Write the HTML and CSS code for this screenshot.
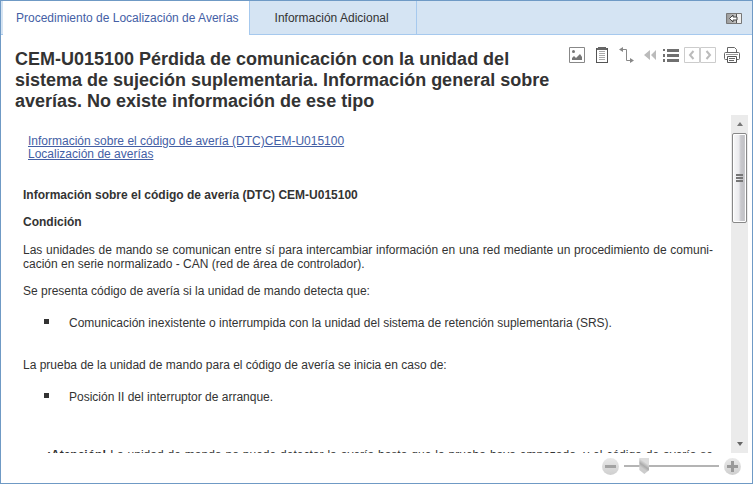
FILE: index.html
```
<!DOCTYPE html>
<html lang="es">
<head>
    <meta charset="UTF-8">
    <title>CEM-U015100</title>
    <link rel="stylesheet" href="styles.css">
</head>
<body>
    <div class="panel">
        <div class="tabs">
            <button type="button" class="tab active">Procedimiento de Localización de Averías</button>
            <button type="button" class="tab">Información Adicional</button>
            <button type="button" class="icon-btn collapse" aria-label="Ocultar">
                <svg width="16" height="11" viewBox="0 0 16 11">
                    <defs>
                        <linearGradient id="dock" x1="0" x2="1"><stop offset="0" stop-color="#999"/><stop offset="1" stop-color="#ddd"/></linearGradient>
                    </defs>
                    <path d="M.5 .5h15v10H.5z" fill="url(#dock)" stroke="#777"/>
                    <path d="M11 1h4v9h-4z" fill="#eee"/>
                    <path d="M10 1h1v9h-1z" fill="#555"/>
                    <path d="M3.500 5.500L7 2v2h4v3H7v2z" fill="#fff" stroke="#444"/>
                </svg>
            </button>
        </div>

        <div class="header">
            <h1>CEM-U015100 Pérdida de comunicación con la unidad del sistema de sujeción suplementaria. Información general sobre averías. No existe información de ese tipo</h1>
            <div class="toolbar">
                <button type="button" class="icon-btn" aria-label="Imagen">
                    <svg width="16" height="16" viewBox="0 0 16 16">
                        <path d="M.5 .5h15v15H.5z" fill="#fff" stroke="#888"/>
                        <circle cx="4.500" cy="4.500" r="1.500" fill="#777"/>
                        <path d="M3 13v-2l2-2 2 2 1-1 1-1 2-2 2 3v3z" fill="#777"/>
                    </svg>
                </button>
                <button type="button" class="icon-btn note" aria-label="Notas">
                    <svg width="12" height="16" viewBox="0 0 12 16" shape-rendering="crispEdges">
                        <path d="M.5 1.500h11v14H.5z" fill="#fff" stroke="#555"/>
                        <path d="M1 1h10v2H1zM2 0h8v2H2z" fill="#666"/>
                        <path d="M3 4.500h6M3 6.500h6M3 8.500h6M3 10.500h6M3 12.500h6" stroke="#aaa"/>
                    </svg>
                </button>
                <button type="button" class="icon-btn" aria-label="Conexión">
                    <svg width="16" height="16" viewBox="0 0 16 16">
                        <path d="M3 2.500h4.500v11H12" fill="none" stroke="#888"/>
                        <path d="M0 2.500L4 0v5zM15 13.500l-4-2.500v5z" fill="#888"/>
                    </svg>
                </button>
                <button type="button" class="icon-btn rewind" aria-label="Atrás">
                    <svg width="13" height="10" viewBox="0 0 13 10"><path d="M6 0v10L0 5zM12 0v10L7 5z" fill="#bbb"/></svg>
                </button>
                <button type="button" class="icon-btn list" aria-label="Lista">
                    <svg width="16" height="13" viewBox="0 0 16 13" shape-rendering="crispEdges">
                        <path d="M0 0h2v2H0zM4 0h12v3H4zM0 5h2v3H0zM4 5h12v3H4zM0 10h2v3H0zM4 10h12v3H4z" fill="#707070"/>
                    </svg>
                </button>
                <div class="pager">
                    <button type="button" class="icon-btn" aria-label="Anterior">
                        <svg width="16" height="16" viewBox="0 0 16 16"><path d="M.5 .5h15v15H.5z" fill="#fff" stroke="#ccc"/><path d="M9.500 4L6 8l3.500 4" fill="none" stroke="#bbb" stroke-width="2"/></svg>
                    </button>
                    <button type="button" class="icon-btn" aria-label="Siguiente">
                        <svg width="16" height="16" viewBox="0 0 16 16"><path d="M.5 .5h15v15H.5z" fill="#fff" stroke="#ccc"/><path d="M6.500 4L10 8l-3.500 4" fill="none" stroke="#bbb" stroke-width="2"/></svg>
                    </button>
                </div>
                <button type="button" class="icon-btn" aria-label="Imprimir">
                    <svg width="16" height="16" viewBox="0 0 16 16">
                        <path d="M3.500 5V.5h7l2 2V5" fill="#fff" stroke="#666"/>
                        <rect x=".5" y="5.500" width="15" height="7" rx="1" fill="#fff" stroke="#666"/>
                        <path d="M2 7h12v1H2z" fill="#999"/>
                        <path d="M3.500 9.500h9v6h-9z" fill="#fff" stroke="#555"/>
                        <path d="M5 11.500h6M5 13.500h5" stroke="#666"/>
                    </svg>
                </button>
            </div>
        </div>

        <div class="view">
            <div class="document">
                <div class="links">
                    <a href="#dtc">Información sobre el código de avería (DTC)CEM-U015100</a>
                    <a href="#localizacion">Localización de averías</a>
                </div>
                <h2 id="dtc">Información sobre el código de avería (DTC) CEM-U015100</h2>
                <h2>Condición</h2>
                <p>Las unidades de mando se comunican entre sí para intercambiar información en una red mediante un procedimiento de comuni&shy;cación en serie normalizado - CAN (red de área de controlador).</p>
                <p>Se presenta código de avería si la unidad de mando detecta que:</p>
                <ul>
                    <li>Comunicación inexistente o interrumpida con la unidad del sistema de retención suplementaria (SRS).</li>
                </ul>
                <p>La prueba de la unidad de mando para el código de avería se inicia en caso de:</p>
                <ul>
                    <li>Posición II del interruptor de arranque.</li>
                </ul>
                <p class="notice" id="localizacion"><b>¡Atención!</b> La unidad de mando no puede detectar la avería hasta que la prueba haya empezado, y el código de avería se</p>
            </div>
            <div class="scrollbar">
                <button type="button" class="icon-btn arrow" aria-label="Subir">
                    <svg width="6" height="4" viewBox="0 0 6 4"><path d="M0 4l3-4 3 4z" fill="#777"/></svg>
                </button>
                <div class="thumb"><span></span><span></span><span></span></div>
                <button type="button" class="icon-btn arrow down" aria-label="Bajar">
                    <svg width="6" height="4" viewBox="0 0 6 4"><path d="M0 0h6L3 4z" fill="#666"/></svg>
                </button>
            </div>
        </div>

        <div class="zoom">
            <button type="button" class="icon-btn round" aria-label="Reducir">
                <svg width="11" height="11" viewBox="0 0 11 11"><path d="M0 4h11v3H0z" fill="#a3a3a3"/></svg>
            </button>
            <input type="range" min="0" max="100" value="18" aria-label="Zoom">
            <button type="button" class="icon-btn round" aria-label="Ampliar">
                <svg width="11" height="11" viewBox="0 0 11 11"><path d="M0 4h4V0h3v4h4v3H7v4H4V7H0z" fill="#999"/></svg>
            </button>
        </div>
    </div>
</body>
</html>
```
FILE: styles.css
```
* {
    box-sizing: border-box;
    margin: 0;
    padding: 0;
}
body {
    font: 12px/14px "Liberation Sans", Arial, sans-serif;
    color: #333;
    background: #fff;
}
button {
    font: inherit;
    color: inherit;
    border: 0;
    background: none;
    cursor: pointer;
}
svg {
    display: block;
}
.panel {
    height: 100vh;
    display: flex;
    flex-direction: column;
    border: 1px solid #6f9ac5;
}

/* tabs */
.tabs {
    flex: none;
    display: flex;
    height: 34px;
    padding-left: 2px;
    background: #d5e4f3;
    box-shadow: inset 0 -1px #a6c9ee;
}
.tab {
    padding: 0 27px 0 25px;
    border-right: 1px solid #a6c9ee;
}
.tab.active {
    padding: 0 10px 0 13px;
    color: #4460a5;
    background: #fff;
}
.icon-btn {
    flex: none;
    display: flex;
    align-items: center;
    justify-content: center;
}
.collapse {
    margin-left: auto;
    padding-right: 10px;
}

/* title and tools */
.header {
    flex: none;
    display: flex;
    justify-content: space-between;
    align-items: flex-start;
    gap: 12px;
    padding: 14px 12px 3px 14px;
}
h1 {
    font-size: 18px;
    line-height: 21px;
}
.toolbar {
    flex: none;
    display: flex;
    align-items: center;
    height: 16px;
    margin-top: -2px;
}
.note {
    margin: 0 11px;
}
.rewind {
    margin: 0 6px 0 9px;
}
.list {
    margin-right: 5px;
}
.pager {
    display: flex;
    margin-right: 8px;
}

/* document */
.view {
    flex: 1;
    min-height: 0;
    display: flex;
    padding-right: 4px;
}
.document {
    flex: 1;
    overflow: hidden;
    padding: 20px 18px 0 22px;
}
.links {
    padding-left: 5px;
    margin-bottom: 27px;
    line-height: 13px;
}
.links a {
    display: table;
    color: #4460a5;
}
h2 {
    font-size: 12px;
    line-height: 14px;
    margin-bottom: 13px;
}
p {
    margin-bottom: 13px;
    text-align: justify;
}
h2 + p {
    margin-top: 14px;
}
ul {
    list-style: none;
    margin: 18px 0 28px;
}
li {
    display: flex;
    padding-left: 21px;
}
li::before {
    content: "";
    width: 5px;
    height: 5px;
    margin: 3px 20px 0 0;
    background: #333;
}
.notice {
    margin-top: 44px;
    padding-left: 24px;
    text-align-last: justify;
}

/* scrollbar */
.scrollbar {
    flex: none;
    display: flex;
    flex-direction: column;
    width: 17px;
    background: #ebebeb;
}
.arrow {
    height: 18px;
}
.down {
    margin-top: auto;
}
.thumb {
    display: flex;
    flex-direction: column;
    align-items: center;
    justify-content: center;
    gap: 1px;
    height: 90px;
    margin: 0 1px;
    border: 1px solid #888;
    border-radius: 2px;
    background: linear-gradient(to right, #f8f8f8, #ebebee 45%, #c8c8cc 60%, #c2c2c6 85%, #ddd);
    box-shadow: inset 0 0 0 1px #fff;
}
.thumb span {
    width: 7px;
    height: 2px;
    background: #777;
}

/* zoom */
.zoom {
    flex: none;
    display: flex;
    align-items: center;
    justify-content: flex-end;
    gap: 5px;
    height: 30px;
    padding: 0 11px 4px 0;
}
.round {
    width: 17px;
    height: 17px;
    border-radius: 50%;
    background: linear-gradient(#e9e9e9, #cfcfcf);
}
.zoom input {
    -webkit-appearance: none;
    appearance: none;
    width: 95px;
    height: 16px;
    background: linear-gradient(#b4b4b4, #b4b4b4) center / 100% 2px no-repeat;
}
.zoom input::-webkit-slider-thumb {
    -webkit-appearance: none;
    width: 10px;
    height: 16px;
    background: linear-gradient(35deg, #ccc 35%, #aaa 50%, #ddd 70%);
    clip-path: polygon(0 0, 100% 0, 100% 75%, 50% 100%, 0 75%);
}
```
